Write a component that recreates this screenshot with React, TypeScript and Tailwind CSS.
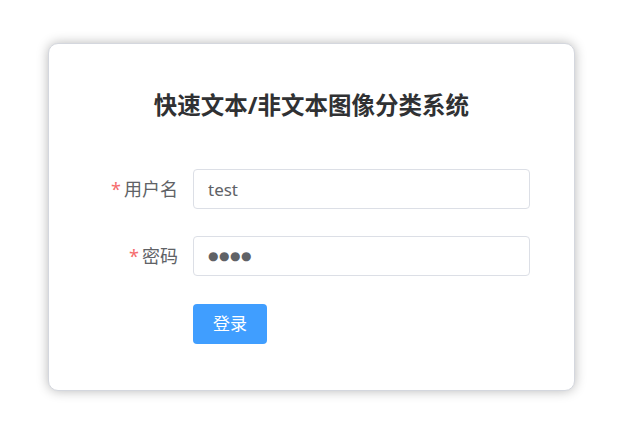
import React, { useState } from 'react';

const font = { fontFamily: '"Noto Sans", "Noto Sans CJK SC", sans-serif' };

export default function App() {
  const [username, setUsername] = useState('test');
  const [password, setPassword] = useState('test');

  return (
    <div className="min-h-[448px] bg-white pt-[43px] pl-[48px]" style={font}>
      <div className="w-[527px] h-[348px] rounded-[10px] bg-white border border-[#d4d7de] shadow-[0_0_12px_rgba(0,0,0,0.28)] px-[44px] pt-[42px]">
        <h2 className="text-center text-[23.5px] font-bold leading-[38px] text-[#303133]">
          快速文本/非文本图像分类系统
        </h2>

        <form className="mt-[45px] flex flex-col gap-[27px]" onSubmit={(e) => e.preventDefault()}>
          <div className="flex items-center">
            <label className="w-[100px] pr-[15px] text-right text-[18px] text-[#606266]">
              <span className="mr-[3px] text-[#f56c6c]">*</span>用户名
            </label>
            <input
              value={username}
              onChange={(e) => setUsername(e.target.value)}
              className="h-[40px] flex-1 rounded-[4px] border border-[#dcdfe6] px-[14px] text-[17px] text-[#606266] outline-none"
            />
          </div>

          <div className="flex items-center">
            <label className="w-[100px] pr-[15px] text-right text-[18px] text-[#606266]">
              <span className="mr-[3px] text-[#f56c6c]">*</span>密码
            </label>
            {/* masked with ● so the dots look like the original */}
            <input
              value={'●'.repeat(password.length)}
              onChange={(e) => setPassword(e.target.value)}
              className="h-[40px] flex-1 rounded-[4px] border border-[#dcdfe6] px-[14px] text-[12px] tracking-[0.5px] text-[#606266] outline-none"
              style={{ fontFamily: '"DejaVu Sans", sans-serif' }}
            />
          </div>

          <div className="flex pl-[100px] pt-[1px]">
            <button
              type="submit"
              className="h-[40px] w-[74px] rounded-[4px] bg-[#409eff] text-[17px] text-white"
            >
              登录
            </button>
          </div>
        </form>
      </div>
    </div>
  );
}
